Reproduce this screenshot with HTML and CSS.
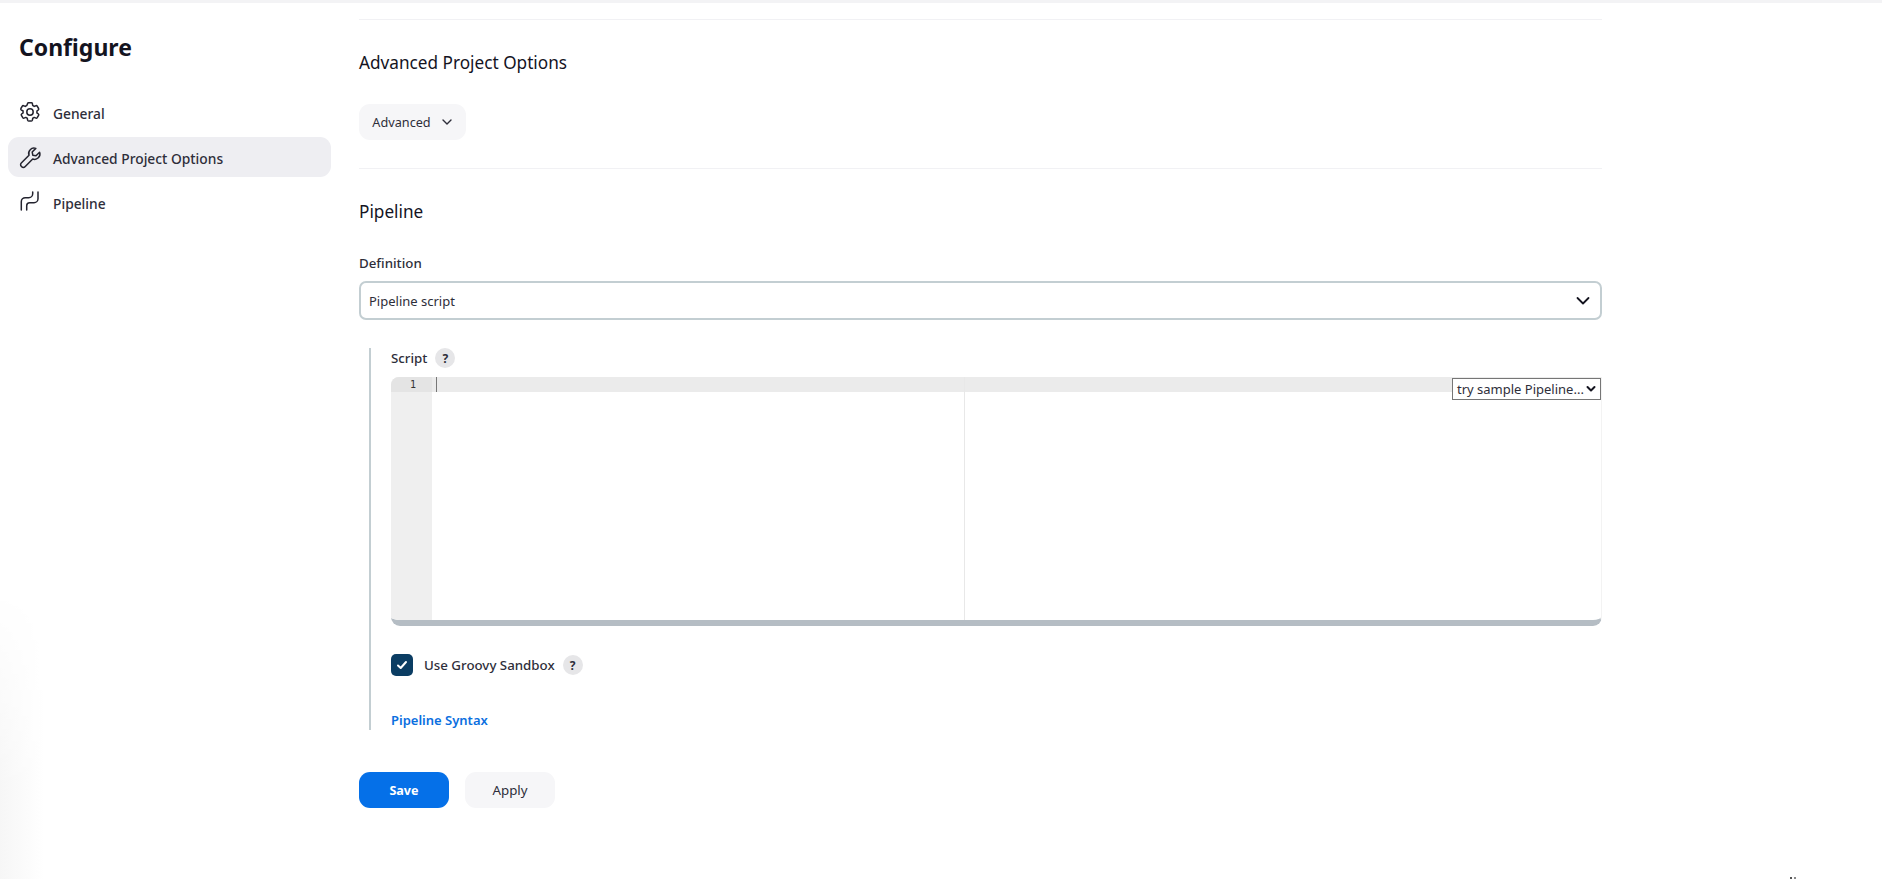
FILE: index.html
```html
<!DOCTYPE html>
<html lang="en">
<head>
<meta charset="utf-8">
<title>Configure</title>
<link rel="stylesheet" href="styles.css">
</head>
<body>
<div class="topbar"></div>
<div class="shade"></div>
<div class="layout">
  <aside class="sidebar">
    <h1 class="title">Configure</h1>
    <nav class="nav">
      <a class="nav-item">
        <svg class="nav-icon" viewBox="0 0 24 24" fill="none" stroke="currentColor" stroke-width="1.5" stroke-linecap="round" stroke-linejoin="round"><path d="M9.6 3.6a1 1 0 0 1 1-.8h2.8a1 1 0 0 1 1 .8l.3 1.9c.5.2 1 .5 1.5.9l1.8-.7a1 1 0 0 1 1.2.4l1.4 2.4a1 1 0 0 1-.2 1.3l-1.5 1.2c.1.6.1 1.2 0 1.8l1.5 1.2a1 1 0 0 1 .2 1.3l-1.4 2.4a1 1 0 0 1-1.2.4l-1.8-.7c-.5.4-1 .7-1.5.9l-.3 1.9a1 1 0 0 1-1 .8h-2.8a1 1 0 0 1-1-.8l-.3-1.9c-.5-.2-1-.5-1.5-.9l-1.8.7a1 1 0 0 1-1.2-.4l-1.4-2.4a1 1 0 0 1 .2-1.3l1.5-1.2a6 6 0 0 1 0-1.8L3.1 9.8a1 1 0 0 1-.2-1.3l1.4-2.4a1 1 0 0 1 1.2-.4l1.8.7c.5-.4 1-.7 1.5-.9z"/><circle cx="12" cy="12" r="3.2"/></svg>
        <span>General</span>
      </a>
      <a class="nav-item active">
        <svg class="nav-icon" viewBox="0 0 24 24" fill="none" stroke="currentColor" stroke-width="1.5" stroke-linecap="round" stroke-linejoin="round"><path d="M21.6 7.2c.7 2 .2 4.200-1.300 5.600-1.500 1.500-3.700 1.900-5.600 1.200L7 21.700a2.300 2.300 0 0 1-3.300 0l-.4-.4a2.300 2.300 0 0 1 0-3.300L11 10.300c-.7-1.900-.3-4.100 1.200-5.600 1.400-1.500 3.600-2 5.600-1.300l-3.600 3.600.6 3.200 3.200.6z"/></svg>
        <span>Advanced Project Options</span>
      </a>
      <a class="nav-item">
        <svg class="nav-icon" viewBox="0 0 24 24" fill="none" stroke="currentColor" stroke-width="1.5" stroke-linecap="round" stroke-linejoin="round"><path d="M3.300 20V11.700a4 4 0 0 1 4-4h3.400a4 4 0 0 0 4-4V2"/><path d="M8.700 20v-4.300a3 3 0 0 1 3-3H16a4 4 0 0 0 4-4V2"/></svg>
        <span>Pipeline</span>
      </a>
    </nav>
  </aside>

  <main class="main">
    <section class="section first">
      <h2 class="section-title">Advanced Project Options</h2>
      <button class="btn-adv">Advanced
        <svg class="adv-chevron" viewBox="0 0 12 12" fill="none" stroke="currentColor" stroke-width="1.400" stroke-linecap="round" stroke-linejoin="round"><path d="M2 4l4 4 4-4"/></svg>
      </button>
    </section>

    <section class="section">
      <h2 class="section-title">Pipeline</h2>
      <label class="field-label">Definition</label>
      <div class="select-box">
        <span>Pipeline script</span>
        <svg class="select-chevron" viewBox="0 0 14 10" fill="none" stroke="currentColor" stroke-width="1.800" stroke-linecap="round" stroke-linejoin="round"><path d="M1.500 2l5.500 5.500L12.500 2"/></svg>
      </div>

      <div class="nested">
        <div class="label-row">
          <span class="script-label">Script</span>
          <span class="help">?</span>
        </div>
        <div class="editor">
          <div class="gutter"><div class="line-no">1</div></div>
          <div class="code">
            <div class="active-line"><span class="caret"></span></div>
          </div>
          <div class="print-margin"></div>
          <div class="sample">try sample Pipeline...
            <svg class="sample-chevron" viewBox="0 0 10 8" fill="none" stroke="currentColor" stroke-width="2" stroke-linecap="round" stroke-linejoin="round"><path d="M1.500 2l3.500 3.500L8.500 2"/></svg>
          </div>
        </div>
        <div class="check-row">
          <span class="checkbox">
            <svg viewBox="0 0 12 12" fill="none" stroke="#fff" stroke-width="2" stroke-linecap="round" stroke-linejoin="round"><path d="M2 6.500l2.700 2.500L10 3"/></svg>
          </span>
          <span class="check-label">Use Groovy Sandbox</span>
          <span class="help">?</span>
        </div>
        <a class="syntax-link">Pipeline Syntax</a>
      </div>
    </section>

    <div class="actions">
      <button class="btn-save">Save</button>
      <button class="btn-apply">Apply</button>
    </div>
  </main>
</div>
<div class="corner-mark"></div>
</body>
</html>
```
FILE: styles.css
```css
* { box-sizing: border-box; }
html, body { margin: 0; height: 100%; overflow: hidden; }
body {
  background: #fff;
  color: #14141f;
  font-family: "Noto Sans", "Open Sans", sans-serif;
  font-size: 13px;
  position: relative;
}
.topbar { height: 3px; background: #f3f3f5; }
.shade {
  position: absolute;
  left: 0;
  bottom: 0;
  width: 44px;
  height: 290px;
  background: linear-gradient(to right, #f6f6f6, #ffffff);
  -webkit-mask-image: linear-gradient(to bottom, transparent, #000 70%);
  mask-image: linear-gradient(to bottom, transparent, #000 70%);
}
.corner-mark {
  position: absolute;
  right: 85px;
  bottom: 0;
  width: 7px;
  height: 2px;
  background: linear-gradient(to right, #555 0 2px, transparent 2px 4px, #888 4px 6px, transparent 6px);
}
.layout { display: flex; position: relative; }
.sidebar { width: 359px; flex: none; padding: 27px 28px 0 8px; }
.title {
  margin: 0 0 0 11px;
  font-size: 23px;
  line-height: 34px;
  font-weight: 700;
  color: #14141f;
}
.nav { margin-top: 28px; display: flex; flex-direction: column; gap: 5px; }
.nav-item {
  height: 40px;
  display: flex;
  align-items: center;
  gap: 11px;
  padding-left: 10px;
  border-radius: 11px;
  color: #2e2e3a;
  font-size: 13.8px;
  font-weight: 500;
}
.nav-item span { margin-top: 2px; }
.nav-item.active { background: #eeeef2; }
.nav-icon { width: 24px; height: 24px; flex: none; color: #23232e; }

.main { width: 1243px; flex: none; }
.section { border-top: 1px solid #f1f1f4; }
.first { margin-top: 16px; height: 149px; padding-top: 31px; }
.section-title {
  margin: 0;
  font-size: 17.2px;
  line-height: 24px;
  font-weight: 400;
  color: #14141f;
}
.btn-adv {
  margin-top: 29px;
  width: 107px;
  height: 36px;
  display: flex;
  align-items: center;
  justify-content: center;
  gap: 10px;
  background: #f6f6f8;
  border: 0;
  border-radius: 11px;
  color: #2e2e3a;
  font: inherit;
  font-size: 12.7px;
}
.adv-chevron { width: 12px; height: 12px; }
.section:not(.first) { padding-top: 31px; }
.field-label {
  display: block;
  margin-top: 29px;
  font-size: 13.3px;
  line-height: 20px;
  font-weight: 500;
  color: #2e2e3a;
}
.select-box {
  margin-top: 8px;
  height: 39px;
  display: flex;
  align-items: center;
  justify-content: space-between;
  padding: 0 9px 0 8px;
  border: 2px solid #c3ced2;
  border-radius: 7px;
  color: #2e2e3a;
  font-size: 13px;
}
.select-chevron { width: 14px; height: 10px; color: #14141f; margin-right: 1px; }
.nested {
  margin: 28px 0 0 10px;
  padding-left: 20px;
  border-left: 2px solid #c3ced2;
  height: 382px;
}
.label-row { display: flex; align-items: center; gap: 8px; height: 20px; }
.script-label { font-size: 13.3px; font-weight: 500; color: #2e2e3a; }
.help {
  width: 20px;
  height: 20px;
  border-radius: 50%;
  background: #e6e6e8;
  color: #2e2e3a;
  font-size: 12px;
  font-weight: 700;
  display: flex;
  align-items: center;
  justify-content: center;
  flex: none;
}
.editor {
  margin-top: 9px;
  height: 249px;
  position: relative;
  display: flex;
  border-bottom: 6px solid #b5bdc4;
  border-right: 1px solid #f3f3f3;
  border-radius: 8px 0 9px 9px;
  overflow: hidden;
}
.gutter { width: 41px; flex: none; background: #efefef; }
.line-no {
  height: 15px;
  background: #e4e4e4;
  text-align: right;
  padding-right: 16px;
  font-family: "DejaVu Sans Mono", monospace;
  font-size: 10px;
  line-height: 15px;
  color: #333;
}
.code { flex: 1; }
.active-line { height: 15px; background: #ebebeb; padding-left: 4px; }
.caret { display: block; width: 1px; height: 15px; background: #777; }
.print-margin {
  position: absolute;
  left: 573px;
  top: 0;
  bottom: 0;
  width: 1px;
  background: #e8e8e8;
}
.sample {
  position: absolute;
  right: 0;
  top: 1px;
  width: 149px;
  height: 22px;
  display: flex;
  align-items: center;
  justify-content: space-between;
  padding: 0 4px;
  background: #fff;
  border: 1px solid #767676;
  color: #2e2e3a;
  font-size: 13px;
  white-space: nowrap;
}
.sample-chevron { width: 10px; height: 8px; color: #14141f; flex: none; }
.check-row {
  margin-top: 28px;
  height: 22px;
  display: flex;
  align-items: center;
}
.checkbox {
  width: 22px;
  height: 22px;
  border-radius: 5px;
  background: #0b3d63;
  display: flex;
  align-items: center;
  justify-content: center;
  flex: none;
  margin-right: 11px;
}
.checkbox svg { width: 12px; height: 12px; }
.check-label { font-size: 13.3px; font-weight: 500; color: #2e2e3a; margin-right: 8px; }
.syntax-link {
  display: block;
  margin-top: 34px;
  font-size: 13px;
  line-height: 20px;
  font-weight: 600;
  color: #0b6fe0;
}
.actions { display: flex; gap: 16px; margin-top: 42px; }
.btn-save, .btn-apply {
  width: 90px;
  height: 36px;
  border: 0;
  border-radius: 11px;
  font: inherit;
}
.btn-save { background: #0570e8; color: #fff; font-size: 12.6px; font-weight: 700; }
.btn-apply { background: #f6f6f8; color: #2e2e3a; font-size: 13.3px; font-weight: 400; }
```
